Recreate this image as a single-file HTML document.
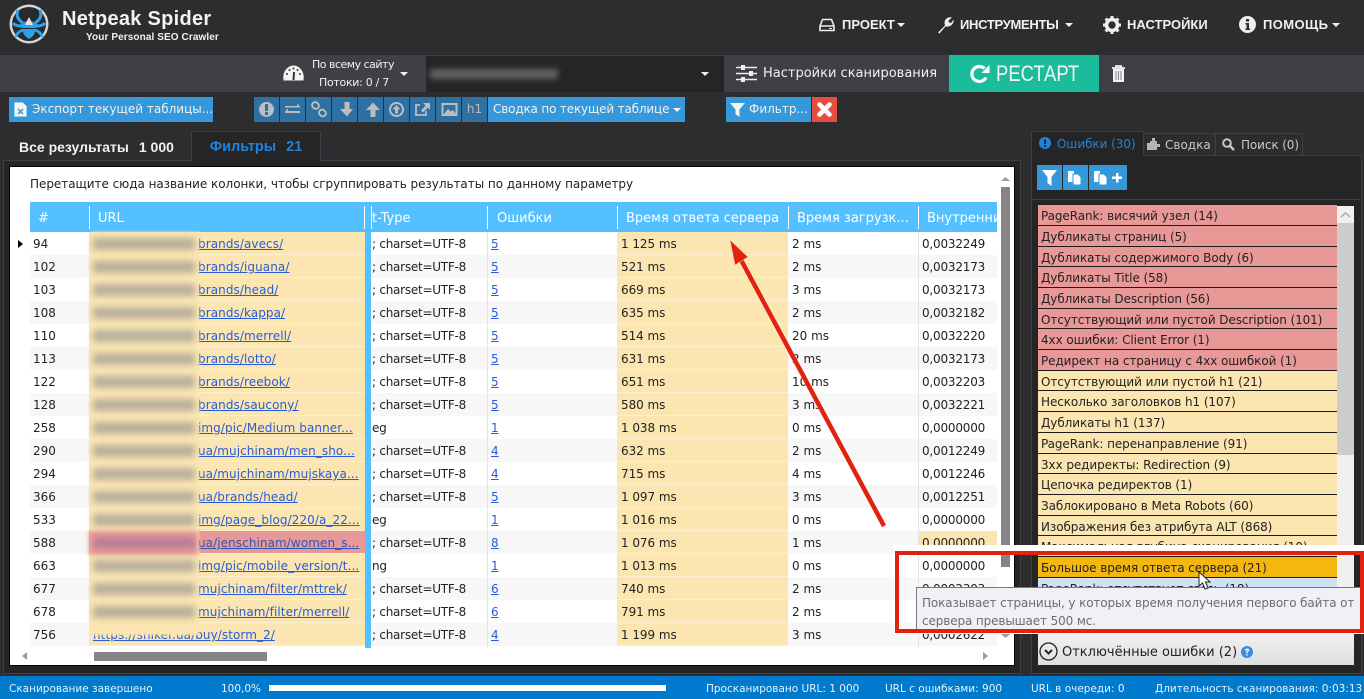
<!DOCTYPE html>
<html><head><meta charset="utf-8"><style>
*{box-sizing:border-box}
html,body{margin:0;padding:0}
body{width:1364px;height:699px;overflow:hidden;background:#2d2d30;position:relative;font:12px "DejaVu Sans","Liberation Sans",sans-serif;color:#fff}
.a{position:absolute;white-space:nowrap}
svg{position:absolute;overflow:visible}
.m{color:#f1f1f1;top:17px;font-weight:bold;font-family:"Liberation Sans",sans-serif;font-size:13px}
.c{width:0;height:0;border-left:4px solid transparent;border-right:4px solid transparent;border-top:4px solid #f1f1f1;position:absolute}
.b{position:absolute;top:97px;height:25px;width:25px;background:#2f70a2}
.bb{position:absolute;top:97px;height:25px;background:#3498db;color:#f1f1f1;line-height:25px;white-space:nowrap;font-size:12px}
#t{position:absolute;left:30px;top:232px;width:967px;height:416px;overflow:hidden;color:#222}
.r{position:absolute;left:0;width:967px;height:23px;line-height:24px;background:#fff}
.r:nth-child(even){background:#f7f7f7}
.r span{position:absolute;top:0;height:23px;overflow:hidden;white-space:nowrap}
.r span:nth-child(1){left:3px}
.r span:nth-child(2){left:59px;width:276px;padding-left:109px;background:#fbe6b2;color:#2a5bd7;text-decoration:underline;border-bottom:1px solid #fdf0d0;letter-spacing:.08px}
.r span:nth-child(3){left:342px;width:116px;letter-spacing:-.25px}
.r span:nth-child(4){left:461px;color:#2a5bd7;text-decoration:underline}
.r span:nth-child(5){left:587px;width:171px;padding-left:4px;background:#fbe6b2;border-bottom:1px solid #fdf0d0;letter-spacing:-.05px}
.r span:nth-child(6){left:762px}
.r span:nth-child(7){left:888px;width:79px;padding-left:4px;letter-spacing:-.2px}
.r.p span:nth-child(2){background:#e99898;color:#3055b5}
.r.p span:nth-child(7){background:#fbe6b2}
.h{position:absolute;top:209px;height:23px;line-height:19px;color:#fff;font-size:13px;white-space:nowrap}
.hs{position:absolute;top:206px;width:1px;height:23px;background:#fff}
.bl{position:absolute;left:93px;width:102px;height:12px;background:#8d8d8d;filter:blur(3.5px);opacity:.6}
#l{position:absolute;left:1038px;top:205.300px;width:299px}
#l div{height:20.700px;line-height:22px;color:#222;padding-left:3px;border-bottom:1px solid #1c1c1c;white-space:nowrap;background:#fbe6b2;overflow:hidden;letter-spacing:-.08px}
#l div.x{background:#e99898}
#l div.o{background:#f5b70f}
#l div.z{background:#cfe2f3}
.st{position:absolute;top:683px;color:#e6f2fb;white-space:nowrap;font-size:10.500px}
</style></head><body>

<!-- top bar -->
<svg style="left:9px;top:4px" width="40" height="40" viewBox="0 0 40 40">
<circle cx="20" cy="20" r="19.500" fill="#d5d5d5"/><circle cx="20" cy="20" r="17" fill="#2a2a2c"/>
<g fill="none" stroke="#2ba3ea" stroke-width="3"><path d="M14 19Q6 14 9 6M26 19Q34 14 31 6M13 22Q6 22 4 19M27 22Q34 22 36 19M14 26Q8 28 7 33M26 26Q32 28 33 33"/></g>
<path d="M11 21Q20 13 29 21L27 24H13Z" fill="#2ba3ea"/><path d="M20 13l4 8h-8z" fill="#e6e6e6"/><path d="M14 25H26Q27 31 20 35Q13 31 14 25Z" fill="#2ba3ea"/>
</svg>
<div class="a" style="left:62px;top:8px;font:bold 20px 'Liberation Sans',sans-serif;letter-spacing:.27px;color:#f2f2f2">Netpeak Spider</div>
<div class="a" style="left:86px;top:32px;font:10px 'Liberation Sans',sans-serif;color:#f2f2f2;letter-spacing:.1px;font-weight:bold">Your Personal SEO Crawler</div>

<svg style="left:819px;top:18px" width="16" height="14" viewBox="0 0 16 14"><path d="M3.500 1.500H12.500L15 8V12.500H1V8ZM1.500 8H14.500" fill="none" stroke="#eee" stroke-width="1.600"/><path d="M10 10h3v1h-3z" fill="#eee"/></svg>
<div class="a m" style="left:842px">ПРОЕКТ</div><div class="c" style="left:897px;top:23px"></div>
<svg style="left:936px;top:16px" width="18" height="18" viewBox="0 0 18 18"><path d="M2 16.500L9 9.500Q7.500 5 10.500 2.500Q13 .7 16 1.500L12.500 4.500L13 6.500L15 7L17.500 3.500Q18 7 15.500 9Q13 11 9.500 10.500L3.500 17.500Z" fill="#eee"/></svg>
<div class="a m" style="left:960px;letter-spacing:-.3px">ИНСТРУМЕНТЫ</div><div class="c" style="left:1065px;top:23px"></div>
<svg style="left:1103px;top:16px" width="18" height="18" viewBox="0 0 18 18"><circle cx="9" cy="9" r="5.500" fill="none" stroke="#eee" stroke-width="3.600"/><path d="M9 0V18M0 9H18M2.600 2.600L15.400 15.400M15.400 2.600L2.600 15.400" stroke="#eee" stroke-width="3" stroke-dasharray="3 12 3 0"/></svg>
<div class="a m" style="left:1127px">НАСТРОЙКИ</div>
<svg style="left:1239px;top:16px" width="17" height="17" viewBox="0 0 17 17"><circle cx="8.500" cy="8.500" r="8.500" fill="#eee"/><path d="M7 3h3v2.500H7zM6.500 7H10V12.500H11V14H6.500V12.500H7.500V8.500H6.500Z" fill="#2d2d30"/></svg>
<div class="a m" style="left:1263px;letter-spacing:.4px">ПОМОЩЬ</div><div class="c" style="left:1332px;top:23px"></div>

<!-- second bar -->
<div class="a" style="left:0;top:55px;width:1364px;height:37px;background:#3f3f46"></div>
<svg style="left:283px;top:65px" width="21" height="17" viewBox="0 0 21 17"><path d="M.5 15.500Q-.5 9 2.500 5Q6 .5 10.500 .5Q15 .5 18.500 5Q21.500 9 20.500 15.500Z" fill="#f4f4f4"/><path d="M10.500 15L11 7" stroke="#333" stroke-width="2"/><circle cx="4" cy="9" r="1" fill="#333"/><circle cx="6.500" cy="5" r="1" fill="#333"/><circle cx="10.500" cy="3.500" r="1" fill="#333"/><circle cx="14.500" cy="5" r="1" fill="#333"/><circle cx="17" cy="9" r="1" fill="#333"/></svg>
<div class="a" style="left:311px;top:58px;font-size:11px;color:#f1f1f1;width:84px;text-align:center;letter-spacing:-.5px">По всему сайту</div>
<div class="a" style="left:319px;top:76px;font-size:11px;color:#f1f1f1;letter-spacing:-.3px">Потоки: 0 / 7</div>
<div class="c" style="left:400px;top:72px"></div>
<div class="a" style="left:426px;top:56px;width:298px;height:36px;background:#252526"></div>
<div class="a" style="left:430px;top:69px;width:128px;height:10px;background:#8a8a8a;filter:blur(3px);opacity:.6"></div>
<div class="c" style="left:701px;top:72px"></div>
<svg style="left:736px;top:64px" width="21" height="19" viewBox="0 0 21 19"><path d="M0 3.500H21M0 9.500H21M0 15.500H21" stroke="#eee" stroke-width="1.600"/><path d="M5 1h4v5H5zM13 7h4v5h-4zM5 13h4v5H5z" fill="#eee"/></svg>
<div class="a" style="left:763px;top:66px;font-size:13px;color:#f1f1f1;letter-spacing:0">Настройки сканирования</div>
<div class="a" style="left:949px;top:55px;width:150px;height:37px;background:#1abc9c"></div>
<svg style="left:969px;top:64px" width="21" height="20" viewBox="0 0 21 20"><path d="M17 13.500A7.500 7.500 0 1 1 15.500 4.500" fill="none" stroke="#fff" stroke-width="3.200"/><path d="M20.500 1V9H12.500Z" fill="#fff"/></svg>
<div class="a" style="left:996px;top:61px;font:22px 'Liberation Sans',sans-serif;color:#f4f4f4;transform:scaleX(.84);transform-origin:left center">РЕСТАРТ</div>
<svg style="left:1111px;top:65px" width="15" height="17" viewBox="0 0 15 17"><path d="M1 3H14M5 3V1H10V3" fill="none" stroke="#f2f2f2" stroke-width="1.800"/><path d="M2 4H13V17H2Z" fill="#f2f2f2"/><path d="M5 6V15M7.500 6V15M10 6V15" stroke="#8a8a96" stroke-width="1.100"/></svg>

<!-- toolbar -->
<div class="bb" style="left:9px;width:204px;padding-left:23px">Экспорт текущей таблицы...</div>
<svg style="left:14px;top:102px" width="13" height="15" viewBox="0 0 13 15"><path d="M1 1H8.500L12 4.500V14H1Z" fill="#f4f4f4" stroke="#fff"/><path d="M4 7L9 12M9 7L4 12" stroke="#3498db" stroke-width="1.500"/></svg>
<div class="b" style="left:254px"></div><div class="b" style="left:280px"></div><div class="b" style="left:306px"></div><div class="b" style="left:332px"></div><div class="b" style="left:358px"></div><div class="b" style="left:384px"></div><div class="b" style="left:410px"></div><div class="b" style="left:436px"></div>
<div class="b" style="left:462px;color:#b9b9b9;font-size:12px;line-height:25px;text-align:center">h1</div>
<svg style="left:254px;top:97px" width="208" height="25" viewBox="0 0 208 25" fill="#bdbdbd" stroke="none">
<circle cx="12.500" cy="12.500" r="7.500"/><path d="M11 7h3v7h-3zM11 15h3v3h-3z" fill="#2f70a2"/>
<path d="M31 9H43V6.500L46 9.500V10.500H31ZM46 14H34V11.500L31 14.500V16H46Z"/>
<g fill="none" stroke="#bdbdbd" stroke-width="2"><rect x="58" y="5.500" width="7" height="6" rx="3" transform="rotate(40 61.500 8.500)"/><rect x="65" y="13" width="7" height="6" rx="3" transform="rotate(40 68.500 16)"/></g>
<path d="M90.500 5H95.500V12H99L93 19.500L86 12H90.500Z"/>
<path d="M119 5.500L126 13H121.500V20H116.500V13H112Z"/>
<circle cx="142.500" cy="12.500" r="6.500" fill="none" stroke="#bdbdbd" stroke-width="2"/><path d="M142.500 8L146.500 12.500H144V16.500H141V12.500H138.500Z"/>
<path d="M166 8H162V18H172V14" fill="none" stroke="#bdbdbd" stroke-width="1.800"/><path d="M169 6H176V13L173.800 10.800L169 15.500L167 13.500L171.600 8.600Z"/>
<rect x="188.500" y="7" width="14" height="11" fill="none" stroke="#bdbdbd" stroke-width="2"/><path d="M190 17L194 12L197 14.500L199 13L202 17Z"/>
</svg>
<div class="bb" style="left:488px;width:197px;padding-left:5px;letter-spacing:-.16px">Сводка по текущей таблице</div><div class="c" style="left:673px;top:108px"></div>
<div class="bb" style="left:726px;width:85px;padding-left:23px">Фильтр...</div>
<svg style="left:730px;top:103px" width="15" height="14" viewBox="0 0 15 14"><path d="M0 0H15L9.500 6.500V14L5.500 11V6.500Z" fill="#f4f4f4"/></svg>
<div class="a" style="left:812px;top:97px;width:25px;height:25px;background:#e74c3c"></div>
<svg style="left:817px;top:102px" width="15" height="15" viewBox="0 0 15 15"><path d="M2.500 2.500L12.500 12.500M12.500 2.500L2.500 12.500" stroke="#fff" stroke-width="4.500" stroke-linecap="round"/></svg>

<!-- left tabs -->
<div class="a" style="left:19px;top:139px;font:bold 14px 'Liberation Sans',sans-serif;color:#f2f2f2">Все результаты<span style="margin-left:10px">1 000</span></div>
<div class="a" style="left:191px;top:131px;width:130px;height:30px;background:#252526;border:1px solid #3f3f46;border-bottom:0;text-align:center;color:#1d84de;font:bold 14.500px/31px 'Liberation Sans',sans-serif">Фильтры<span style="margin-left:10px">21</span></div>
<div class="a" style="left:3px;top:160px;width:1018px;height:514px;background:#252526;border:1px solid #3f3f46"></div>
<div class="a" style="left:191px;top:159px;width:130px;height:3px;background:#252526;border-left:1px solid #3f3f46;border-right:1px solid #3f3f46"></div>
<div class="a" style="left:9px;top:166px;width:1006px;height:500px;background:#fff;border:1px solid #000"></div>
<div class="a" style="left:30px;top:177px;color:#222;font-size:12px;letter-spacing:-.04px">Перетащите сюда название колонки, чтобы сгруппировать результаты по данному параметру</div>

<!-- table head -->
<div class="a" style="left:30px;top:202px;width:967px;height:30px;background:#55c0ff"></div>
<div class="h" style="left:38px">#</div><div class="h" style="left:98px">URL</div>
<div class="h" style="left:372px">t-Type</div><div class="h" style="left:497px">Ошибки</div><div class="h" style="left:626px">Время ответа сервера</div><div class="h" style="left:797px">Время загрузк...</div><div class="h" style="left:927px;width:70px;overflow:hidden">Внутренни</div>
<div class="hs" style="left:89px"></div><div class="hs" style="left:364px"></div><div class="hs" style="left:371px"></div><div class="hs" style="left:487px"></div><div class="hs" style="left:617px"></div><div class="hs" style="left:788px"></div><div class="hs" style="left:918px"></div>

<!-- rows -->
<div id="t">
<div class="r" style="top:0"><span>94</span><span>brands/avecs/</span><span>; charset=UTF-8</span><span>5</span><span>1 125 ms</span><span>2 ms</span><span>0,0032249</span></div>
<div class="r" style="top:23px"><span>102</span><span>brands/iguana/</span><span>; charset=UTF-8</span><span>5</span><span>521 ms</span><span>2 ms</span><span>0,0032173</span></div>
<div class="r" style="top:46px"><span>103</span><span>brands/head/</span><span>; charset=UTF-8</span><span>5</span><span>669 ms</span><span>3 ms</span><span>0,0032173</span></div>
<div class="r" style="top:69px"><span>108</span><span>brands/kappa/</span><span>; charset=UTF-8</span><span>5</span><span>635 ms</span><span>2 ms</span><span>0,0032182</span></div>
<div class="r" style="top:92px"><span>110</span><span>brands/merrell/</span><span>; charset=UTF-8</span><span>5</span><span>514 ms</span><span>20 ms</span><span>0,0032220</span></div>
<div class="r" style="top:115px"><span>113</span><span>brands/lotto/</span><span>; charset=UTF-8</span><span>5</span><span>631 ms</span><span>2 ms</span><span>0,0032173</span></div>
<div class="r" style="top:138px"><span>122</span><span>brands/reebok/</span><span>; charset=UTF-8</span><span>5</span><span>651 ms</span><span>10 ms</span><span>0,0032203</span></div>
<div class="r" style="top:161px"><span>128</span><span>brands/saucony/</span><span>; charset=UTF-8</span><span>5</span><span>580 ms</span><span>3 ms</span><span>0,0032221</span></div>
<div class="r" style="top:184px"><span>258</span><span>img/pic/Medium banner...</span><span>eg</span><span>1</span><span>1 038 ms</span><span>0 ms</span><span>0,0000000</span></div>
<div class="r" style="top:207px"><span>290</span><span>ua/mujchinam/men_sho...</span><span>; charset=UTF-8</span><span>4</span><span>632 ms</span><span>2 ms</span><span>0,0012249</span></div>
<div class="r" style="top:230px"><span>294</span><span>ua/mujchinam/mujskaya...</span><span>; charset=UTF-8</span><span>4</span><span>715 ms</span><span>4 ms</span><span>0,0012246</span></div>
<div class="r" style="top:253px"><span>366</span><span>ua/brands/head/</span><span>; charset=UTF-8</span><span>5</span><span>1 097 ms</span><span>3 ms</span><span>0,0012251</span></div>
<div class="r" style="top:276px"><span>533</span><span>img/page_blog/220/a_22...</span><span>eg</span><span>1</span><span>1 016 ms</span><span>0 ms</span><span>0,0000000</span></div>
<div class="r p" style="top:299px"><span>588</span><span>ua/jenschinam/women_s...</span><span>; charset=UTF-8</span><span>8</span><span>1 076 ms</span><span>1 ms</span><span>0,0000000</span></div>
<div class="r" style="top:322px"><span>663</span><span>img/pic/mobile_version/t...</span><span>ng</span><span>1</span><span>1 013 ms</span><span>0 ms</span><span>0,0000000</span></div>
<div class="r" style="top:345px"><span>677</span><span>mujchinam/filter/mttrek/</span><span>; charset=UTF-8</span><span>6</span><span>740 ms</span><span>2 ms</span><span>0,0002303</span></div>
<div class="r" style="top:368px"><span>678</span><span>mujchinam/filter/merrell/</span><span>; charset=UTF-8</span><span>6</span><span>791 ms</span><span>2 ms</span><span>0,0002303</span></div>
<div class="r" style="top:391px"><span>756</span><span style="padding-left:4px">https://sniker.ua/buy/storm_2/</span><span>; charset=UTF-8</span><span>4</span><span>1 199 ms</span><span>3 ms</span><span>0,0002622</span></div>
</div>
<div class="a" style="left:365px;top:202px;width:6px;height:446px;background:#55c0ff"></div>
<div class="a" style="left:487px;top:232px;width:1px;height:416px;background:#e4e4e4"></div>
<div class="a" style="left:918px;top:232px;width:1px;height:416px;background:#e4e4e4"></div>
<svg style="left:18px;top:240px" width="6" height="8" viewBox="0 0 6 8"><path d="M0 0L5 4L0 8Z" fill="#000"/></svg>

<!-- blurred urls -->
<div class="a" style="left:90px;top:232px;width:109px;height:403px;background:#fbe6b2;filter:blur(1px)"></div>
<div class="a" style="left:89px;top:531px;width:109px;height:24px;background:#e99898;filter:blur(2px)"></div>
<div class="bl" style="top:238px"></div><div class="bl" style="top:261px"></div><div class="bl" style="top:284px"></div><div class="bl" style="top:307px"></div><div class="bl" style="top:330px"></div><div class="bl" style="top:353px"></div><div class="bl" style="top:376px"></div><div class="bl" style="top:399px"></div><div class="bl" style="top:422px"></div><div class="bl" style="top:445px"></div><div class="bl" style="top:468px"></div><div class="bl" style="top:491px"></div><div class="bl" style="top:514px"></div><div class="bl" style="top:537px;background:#9a6f9a"></div><div class="bl" style="top:560px"></div><div class="bl" style="top:583px"></div><div class="bl" style="top:606px"></div>

<!-- table scrollbars -->
<div class="a" style="left:94px;top:652px;width:173px;height:9px;background:#858585"></div>
<div class="a" style="left:22px;top:652px;width:0;height:0;border:4px solid transparent;border-right:5px solid #999;border-left:0"></div>
<div class="a" style="left:983px;top:652px;width:0;height:0;border:4px solid transparent;border-left:5px solid #999;border-right:0"></div>
<div class="a" style="left:1001px;top:187px;width:9px;height:380px;background:#858585"></div>
<svg style="left:1001px;top:176px" width="9" height="6" viewBox="0 0 9 6"><path d="M0 5L4.500 1L9 5" fill="#999"/></svg>
<svg style="left:1001px;top:633px" width="9" height="6" viewBox="0 0 9 6"><path d="M0 1L4.500 5L9 1" fill="#999"/></svg>

<!-- arrow -->
<svg style="left:0;top:0" width="1364" height="699"><path d="M884 526L740 258" stroke="#fff" stroke-width="6" opacity=".35"/><path d="M884 526L740 258" stroke="#e0220f" stroke-width="4.500"/><path d="M730 240L748 257L735 265Z" fill="#e0220f" stroke="#fff" stroke-opacity=".4" stroke-width=".8"/></svg>

<!-- right panel -->
<div class="a" style="left:1031px;top:131px;width:113px;height:25px;background:#252526;border:1px solid #3f3f46;border-bottom:0;color:#1d84de;font-size:12px;line-height:24px;padding-left:25px;z-index:2;letter-spacing:-.05px">Ошибки (30)</div>
<svg style="left:1039px;top:137px;z-index:3" width="12" height="12" viewBox="0 0 12 12"><circle cx="6" cy="6" r="6" fill="#1d84de"/><path d="M5 2.500h2V7H5zM5 8h2v2H5z" fill="#252526"/></svg>
<div class="a" style="left:1143px;top:133px;width:73px;height:23px;background:#2d2d30;border:1px solid #3f3f46;border-bottom:0;color:#c8c8c8;line-height:22px;padding-left:21px">Сводка</div>
<svg style="left:1147px;top:138px" width="13" height="12" viewBox="0 0 13 12"><path d="M3 3H5V0H8V3H10V6H13V9H10V12H0V5H3Z" fill="#b5b5b5"/></svg>
<div class="a" style="left:1215px;top:133px;width:88px;height:23px;background:#2d2d30;border:1px solid #3f3f46;border-bottom:0;color:#c8c8c8;line-height:22px;padding-left:25px;letter-spacing:-.1px">Поиск (0)</div>
<svg style="left:1222px;top:138px" width="13" height="13" viewBox="0 0 13 13"><circle cx="5" cy="5" r="3.800" fill="none" stroke="#c8c8c8" stroke-width="2"/><path d="M8 8L12 12" stroke="#c8c8c8" stroke-width="2.500"/></svg>
<div class="a" style="left:1031px;top:155px;width:331px;height:519px;background:#252526;border:1px solid #3f3f46"></div>
<div class="a" style="left:1032px;top:199px;width:329px;height:1px;background:#3f3f46"></div>
<div class="a" style="left:1037px;top:165px;width:25px;height:25px;background:#3498db"></div>
<div class="a" style="left:1063px;top:165px;width:25px;height:25px;background:#3498db"></div>
<div class="a" style="left:1089px;top:165px;width:38px;height:25px;background:#3498db"></div>
<svg style="left:1037px;top:165px" width="90" height="25" viewBox="0 0 90 25" fill="#fff"><path d="M5 5H20L14.500 12V21L10.500 18V12Z"/><path d="M31 6H37V17H31Z"/><path d="M36 9H41L44 12V20H36Z" stroke="#3498db"/><path d="M57 6H63V17H57Z"/><path d="M62 9H67L70 12V20H62Z" stroke="#3498db"/><path d="M75 11.500H79V8H81.500V11.500H85V14H81.500V17.500H79V14H75Z"/></svg>

<div class="a" style="left:1038px;top:206px;width:316px;height:431px;background:#f0f0f0"></div>
<div class="a" style="left:1337px;top:223px;width:17px;height:232px;background:#cdcdcd"></div>
<svg style="left:1341px;top:212px" width="9" height="6" viewBox="0 0 9 6"><path d="M0 5L4.500 1L9 5" fill="none" stroke="#aaa" stroke-width="1.500"/></svg>
<div id="l">
<div class="x">PageRank: висячий узел (14)</div>
<div class="x">Дубликаты страниц (5)</div>
<div class="x">Дубликаты содержимого Body (6)</div>
<div class="x">Дубликаты Title (58)</div>
<div class="x">Дубликаты Description (56)</div>
<div class="x">Отсутствующий или пустой Description (101)</div>
<div class="x">4xx ошибки: Client Error (1)</div>
<div class="x">Редирект на страницу с 4xx ошибкой (1)</div>
<div>Отсутствующий или пустой h1 (21)</div>
<div>Несколько заголовков h1 (107)</div>
<div>Дубликаты h1 (137)</div>
<div>PageRank: перенаправление (91)</div>
<div>3xx редиректы: Redirection (9)</div>
<div>Цепочка редиректов (1)</div>
<div>Заблокировано в Meta Robots (60)</div>
<div>Изображения без атрибута ALT (868)</div>
<div>Максимальная глубина сканирования (10)</div>
<div class="o">Большое время ответа сервера (21)</div>
<div class="z">PageRank: отсутствует связь (18)</div>
</div>
<div class="a" style="left:1038px;top:637px;width:316px;height:28px;background:linear-gradient(#f0f0f0,#dedede);color:#222;font-size:13px;line-height:31px;padding-left:24px">Отключённые ошибки (2)</div>
<svg style="left:1039px;top:642px" width="19" height="19" viewBox="0 0 19 19"><circle cx="9.500" cy="9.500" r="8.500" fill="none" stroke="#222" stroke-width="1.300"/><path d="M6 8L9.500 11.500L13 8" fill="none" stroke="#222" stroke-width="2"/></svg>
<svg style="left:1241px;top:646px" width="12" height="12" viewBox="0 0 12 12"><circle cx="6" cy="6" r="6" fill="#3a8ee0"/><path d="M4 4.500Q4.500 2.500 6.300 2.500Q8.300 2.800 8 4.500Q7.500 5.800 6.500 6.300V7.500H5.300V5.500Q7 5 6.700 4.200Q6 3.500 5.300 5Z M5.300 8.300h1.300v1.500H5.300z" fill="#fff"/></svg>

<!-- tooltip and callout -->
<svg style="left:1198px;top:571px;z-index:6" width="16" height="20" viewBox="0 0 16 20"><path d="M1 1V15L4.500 12L7 18L10 17L7.500 11H12Z" fill="#fff" stroke="#222" stroke-width="1"/></svg>
<div class="a" style="left:894px;top:545px;width:470px;height:89px;border:1px solid #fff;border-right:0;border-top-width:6px;border-bottom-width:2px"></div>
<div class="a" style="left:916px;top:587px;width:448px;height:44px;background:#f0f1f7;border:1px solid #7a7a7a;border-right:0;border-bottom:0;color:#6d6d6d;font-size:12px;line-height:17.500px;padding:7px 0 0 5px;overflow:hidden;z-index:5;letter-spacing:-.12px">Показывает страницы, у которых время получения первого байта от<br>сервера превышает 500 мс.</div>
<div class="a" style="left:895px;top:551px;width:469px;height:82px;border:4px solid #e0220f;z-index:7"></div>

<!-- status bar -->
<div class="a" style="left:0;top:676px;width:1364px;height:23px;background:#007acc"></div>
<div class="st" style="left:9px">Сканирование завершено</div>
<div class="st" style="left:221px">100,0%</div>
<div class="a" style="left:269px;top:685px;width:397px;height:6px;background:#fff"></div>
<div class="st" style="left:706px">Просканировано URL: 1 000</div>
<div class="st" style="left:885px">URL с ошибками: 900</div>
<div class="st" style="left:1031px">URL в очереди: 0</div>
<div class="st" style="left:1155px">Длительность сканирования: 0:03:13</div>
</body></html>
